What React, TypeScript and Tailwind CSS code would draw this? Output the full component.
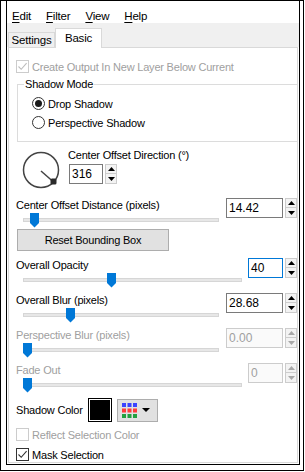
import React from "react";

function Check({ checked, disabled }: { checked?: boolean; disabled?: boolean }) {
  return (
    <div
      className={`w-[13px] h-[13px] shrink-0 border bg-white flex items-center justify-center ${
        disabled ? "border-[#cccccc]" : "border-[#333333]"
      }`}
    >
      {checked && (
        <svg width="11" height="11" viewBox="0 0 11 11">
          <path
            d="M1.5 5.5 L4.2 8.3 L9.6 2.2"
            fill="none"
            stroke={disabled ? "#bdbdbd" : "#333333"}
            strokeWidth="1.1"
          />
        </svg>
      )}
    </div>
  );
}

function Radio({ checked }: { checked?: boolean }) {
  return (
    <div className="w-[13px] h-[13px] shrink-0 rounded-full border border-[#333333] bg-white flex items-center justify-center">
      {checked && <div className="w-[7px] h-[7px] rounded-full bg-[#1a1a1a]" />}
    </div>
  );
}

function Spinner({ disabled }: { disabled?: boolean }) {
  const c = disabled ? "#a8a8a8" : "#000000";
  return (
    <div className="flex flex-col w-[12px] h-[20px] shrink-0">
      <div className="h-[10px] border border-[#cccccc] bg-[#f3f3f3] flex items-center justify-center">
        <svg width="7" height="4" viewBox="0 0 7 4">
          <path d="M0 4 L3.5 0 L7 4 Z" fill={c} />
        </svg>
      </div>
      <div className="h-[10px] border border-t-0 border-[#cccccc] bg-[#f3f3f3] flex items-center justify-center">
        <svg width="7" height="4" viewBox="0 0 7 4">
          <path d="M0 0 L7 0 L3.5 4 Z" fill={c} />
        </svg>
      </div>
    </div>
  );
}

function Spin({
  value,
  width,
  focused,
  disabled,
  gap = "gap-[2px]",
}: {
  value: string;
  width: string;
  focused?: boolean;
  disabled?: boolean;
  gap?: string;
}) {
  const border = focused
    ? "border-[#0078d7]"
    : disabled
    ? "border-[#cccccc]"
    : "border-[#7a7a7a]";
  return (
    <div className={`flex ${gap} h-[20px]`}>
      <div
        className={`${width} h-[20px] border ${border} ${
          disabled ? "bg-[#fafafa] text-[#a0a0a0]" : "bg-white text-black"
        } flex items-center pl-[2px] text-[12px] tracking-normal`}
      >
        {value}
      </div>
      <Spinner disabled={disabled} />
    </div>
  );
}

function Slider({ width, thumb }: { width: string; thumb: string }) {
  return (
    <div className={`relative ${width} h-[15px] ml-[7px] mt-[1px]`}>
      <div className="absolute left-0 right-0 top-[5px] h-[4px] bg-[#e7e7e7] border border-[#d6d6d6]" />
      <svg
        className={`absolute top-0 ${thumb}`}
        width="9"
        height="15"
        viewBox="0 0 9 15"
      >
        <path d="M0 0 H9 V10 L4.5 14.5 L0 10 Z" fill="#0078d7" />
      </svg>
    </div>
  );
}

function Section({
  label,
  disabled,
  sliderWidth,
  thumb,
  spin,
  mt,
}: {
  label: string;
  disabled?: boolean;
  sliderWidth: string;
  thumb: string;
  spin: React.ReactNode;
  mt: string;
}) {
  return (
    <div className={`${mt} h-[30px] flex justify-between`}>
      <div className="flex flex-col">
        <div className={`h-[14px] leading-[14px] ${disabled ? "text-[#a0a0a0]" : "text-black"}`}>
          {label}
        </div>
        <Slider width={sliderWidth} thumb={thumb} />
      </div>
      <div>{spin}</div>
    </div>
  );
}

function Dial() {
  return (
    <svg width="40" height="40" viewBox="0 0 40 40" className="shrink-0">
      <circle cx="20" cy="20" r="17.5" fill="none" stroke="#444444" strokeWidth="1.5" />
      <line x1="20" y1="21" x2="32" y2="31.5" stroke="#444444" strokeWidth="1.5" />
      <rect x="29.5" y="28.5" width="6" height="6" rx="1.5" fill="#2a2a2a" />
    </svg>
  );
}

export default function App() {
  return (
    <div className="w-[304px] h-[471px] border border-black border-t bg-white flex flex-col font-['Liberation_Sans',Arial,sans-serif] text-[11px] tracking-[-0.2px] text-black">
      <div className="ml-[5px] mr-[3px] mb-[5px] flex-1 border border-t-0 border-black flex flex-col">
        {/* Menu bar */}
        <div className="h-[22px] bg-white flex pl-[5px] pt-[8px] gap-[15px] leading-[14px] text-[11.5px]">
          <span>
            <span className="underline underline-offset-2">E</span>dit
          </span>
          <span>
            <span className="underline underline-offset-2">F</span>ilter
          </span>
          <span>
            <span className="underline underline-offset-2">V</span>iew
          </span>
          <span>
            <span className="underline underline-offset-2">H</span>elp
          </span>
        </div>
        {/* Tabs */}
        <div className="h-[24px] bg-[#f0f0f0] flex items-end pl-px">
          <div className="w-[47px] h-[15px] border border-b-0 border-[#d9d9d9] bg-[#f0f0f0] flex items-center justify-center leading-[14px] text-[11.5px]">
            Settings
          </div>
          <div className="relative z-10 w-[47px] h-[20px] -mb-px border border-b-0 border-[#d9d9d9] bg-white flex items-start justify-center pt-[2px] leading-[14px] text-[11.5px]">
            Basic
          </div>
        </div>
        {/* Panel */}
        <div className="flex-1 mb-px mx-px border border-[#d9d9d9] bg-white pl-[7px] flex flex-col">
          <div className="mt-[12px] h-[13px] flex items-center gap-[3px] text-[#a0a0a0]">
            <Check checked disabled />
            <span className="leading-[14px]">Create Output In New Layer Below Current</span>
          </div>

          <div className="relative mt-[11px] ml-px h-[58px] border border-r-0 border-[#dcdcdc] flex flex-col pl-[14px] pt-[12px] gap-[6px]">
            <span className="absolute left-[6px] top-[-8px] bg-white px-px leading-[14px]">
              Shadow Mode
            </span>
            <div className="h-[13px] flex items-center gap-[3px]">
              <Radio checked />
              <span className="leading-[14px]">Drop Shadow</span>
            </div>
            <div className="h-[13px] flex items-center gap-[3px]">
              <Radio />
              <span className="leading-[14px]">Perspective Shadow</span>
            </div>
          </div>

          <div className="h-[50px] flex">
            <div className="ml-[5px] mt-[8px]">
              <Dial />
            </div>
            <div className="ml-[7px] flex flex-col">
              <div className="mt-[6px] h-[14px] leading-[14px]">Center Offset Direction (°)</div>
              <div className="mt-[2px] ml-px">
                <Spin value="316" width="w-[34px]" />
              </div>
            </div>
          </div>

          <Section
            mt="mt-[6px]"
            label="Center Offset Distance (pixels)"
            sliderWidth="w-[196px]"
            thumb="left-[7px]"
            spin={<Spin value="14.42" width="w-[57px]" />}
          />

          <button className="mt-px ml-px w-[152px] h-[22px] bg-[#e1e1e1] border border-[#adadad] flex items-center justify-center leading-[14px]">
            Reset Bounding Box
          </button>

          <Section
            mt="mt-[7px]"
            label="Overall Opacity"
            sliderWidth="w-[219px]"
            thumb="left-[84px]"
            spin={<Spin value="40" width="w-[35px]" focused />}
          />
          <Section
            mt="mt-[5px]"
            label="Overall Blur (pixels)"
            sliderWidth="w-[196px]"
            thumb="left-[43px]"
            spin={<Spin value="28.68" width="w-[57px]" />}
          />
          <Section
            mt="mt-[5px]"
            label="Perspective Blur (pixels)"
            disabled
            sliderWidth="w-[196px]"
            thumb="left-0"
            spin={<Spin value="0.00" width="w-[57px]" disabled />}
          />
          <Section
            mt="mt-[5px]"
            label="Fade Out"
            disabled
            sliderWidth="w-[219px]"
            thumb="left-0"
            spin={<Spin value="0" width="w-[35px]" disabled />}
          />

          <div className="mt-[5px] h-[24px] flex items-center">
            <span className="w-[72px] leading-[14px]">Shadow Color</span>
            <div className="w-[24px] h-[24px] border border-black bg-white p-px">
              <div className="w-full h-full bg-black" />
            </div>
            <div className="ml-[5px] w-[41px] h-[23px] bg-[#e1e1e1] border border-[#adadad] flex items-center pl-[4px] gap-[5px]">
              <svg width="15" height="15" viewBox="0 0 15 15">
                <rect x="0" y="0" width="4" height="4" fill="#3b44ff" />
                <rect x="5.5" y="0" width="4" height="4" fill="#3b44ff" />
                <rect x="11" y="0" width="4" height="4" fill="#3b44ff" />
                <rect x="0" y="5.5" width="4" height="4" fill="#ff3b3b" />
                <rect x="5.5" y="5.5" width="4" height="4" fill="#ff3b3b" />
                <rect x="11" y="5.5" width="4" height="4" fill="#ff3b3b" />
                <rect x="0" y="11" width="4" height="4" fill="#22a040" />
                <rect x="5.5" y="11" width="4" height="4" fill="#22a040" />
                <rect x="11" y="11" width="4" height="4" fill="#22a040" />
              </svg>
              <svg width="8" height="4" viewBox="0 0 8 4">
                <path d="M0 0 H8 L4 4 Z" fill="#000000" />
              </svg>
            </div>
          </div>

          <div className="mt-[6px] h-[13px] flex items-center gap-[3px] text-[#a0a0a0]">
            <Check disabled />
            <span className="leading-[14px]">Reflect Selection Color</span>
          </div>
          <div className="mt-[7px] h-[13px] flex items-center gap-[3px]">
            <Check checked />
            <span className="leading-[14px]">Mask Selection</span>
          </div>
        </div>
      </div>
    </div>
  );
}
